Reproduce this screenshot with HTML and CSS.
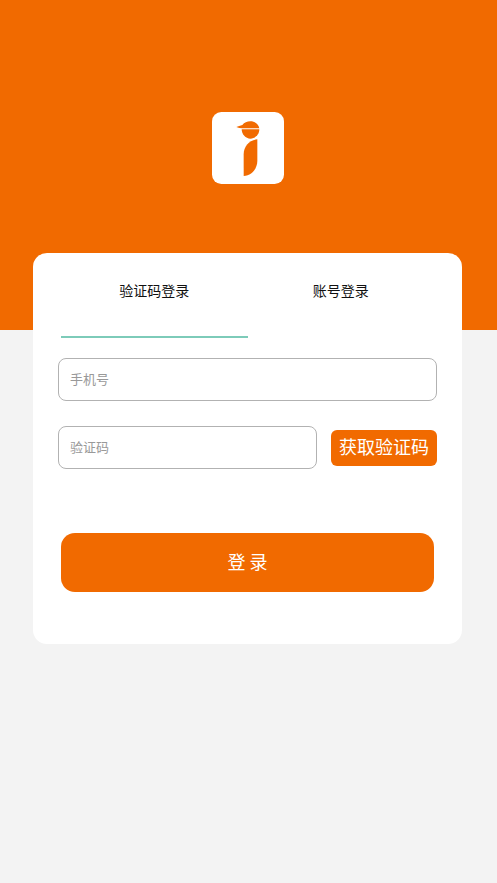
FILE: index.html
```html
<!DOCTYPE html>
<html lang="zh-CN">
<head>
<meta charset="utf-8">
<meta name="viewport" content="width=device-width, initial-scale=1">
<title>登录</title>
<link rel="stylesheet" href="styles.css">
</head>
<body>
<header class="hero">
  <svg class="logo" viewBox="0 0 216 216" aria-hidden="true">
    <rect class="logo-tile" width="216" height="216" rx="28"/>
    <path class="logo-mark" d="M73 45Q81 42 91 39C97 32 105 28 115 28C129 28 140 37 142 49H90Q82 49 73 45Z"/>
    <path class="logo-mark" d="M89 52H142C142 67 130 80 115 80C101 80 89 67 89 52Z"/>
    <path class="logo-mark" d="M136 82V147C136 170 118 192 95 192V127C95 103 112 84 136 82Z"/>
  </svg>
</header>
<main class="card">
  <nav class="tabs">
    <button class="tab tab-active" type="button">验证码登录</button>
    <button class="tab" type="button">账号登录</button>
  </nav>
  <form class="form">
    <input class="field" type="tel" placeholder="手机号" aria-label="手机号">
    <div class="code-row">
      <input class="field" type="text" placeholder="验证码" aria-label="验证码">
      <button class="code-button" type="button">获取验证码</button>
    </div>
    <button class="submit" type="submit">登 录</button>
  </form>
</main>
</body>
</html>
```
FILE: styles.css
```css
* {
  box-sizing: border-box;
}

body {
  margin: 0;
  background: #f3f3f3;
  font-family: "Noto Sans CJK SC", sans-serif;
}

button,
input {
  margin: 0;
  font-family: inherit;
}

.hero {
  display: flex;
  justify-content: center;
  height: 330px;
  padding: 112px 2px 0 0;
  background: #f16a00;
}

.logo {
  width: 72px;
  height: 72px;
}

.logo-tile {
  fill: #fff;
}

.logo-mark {
  fill: #f16a00;
}

.card {
  margin: -77px 35px 0 33px;
  padding: 0 25px 52px;
  border-radius: 14px;
  background: #fff;
}

.tabs {
  display: flex;
  margin: 0 3px;
}

.tab {
  flex: 1;
  height: 85px;
  padding: 0 0 10px;
  border: 0;
  border-bottom: 2px solid transparent;
  background: none;
  color: #111;
  font-size: 14px;
}

.tab-active {
  border-bottom-color: #7dcbb9;
}

.form {
  display: flex;
  flex-direction: column;
  gap: 25px;
  padding-top: 20px;
}

.field {
  width: 100%;
  min-width: 0;
  height: 43px;
  padding: 0 11px 2px;
  border: 1px solid #b2b2b2;
  border-radius: 8px;
  background: #fff;
  color: #222;
  font-size: 13px;
}

.field::placeholder {
  color: #999;
}

.code-row {
  display: flex;
  align-items: center;
  gap: 14px;
}

.code-button {
  flex: none;
  height: 36px;
  padding: 0 8px 4px;
  border: 0;
  border-radius: 6px;
  background: #f16a00;
  color: #fff;
  font-size: 18px;
}

.submit {
  height: 59px;
  margin: 39px 3px 0;
  padding: 0 0 3px;
  border: 0;
  border-radius: 14px;
  background: #f16a00;
  color: #fff;
  font-size: 18px;
}
```
